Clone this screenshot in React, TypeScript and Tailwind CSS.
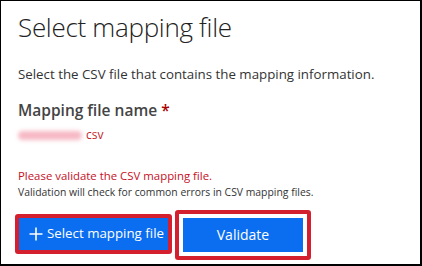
export default function App() {
  return (
    <div className="w-[422px] h-[266px] bg-white border-black border-t border-l border-r-2 border-b-2 font-['Open_Sans',sans-serif] overflow-hidden">
      <div className="pl-[17px] pt-[6px]">
        <h1 className="text-[26px] font-light leading-[40px] text-[#222] tracking-[-0.3px]">Select mapping file</h1>
        <p className="mt-[18px] text-[13.3px] leading-[18px] text-[#333]">Select the CSV file that contains the mapping information.</p>
        <div className="mt-[17px] text-[15.5px] font-semibold leading-[20px] text-[#444]">
          Mapping file name <span className="text-[#a80000]">*</span>
        </div>
        <div className="mt-[7px] flex items-center gap-[4px] text-[12px] leading-[16px]">
          <span className="inline-block w-[64px] h-[9px] rounded-full bg-[#f6b8c4] blur-[2px]" />
          <span className="text-[#c4262e]">csv</span>
        </div>
        <p className="mt-[25px] text-[11.4px] leading-[16px] text-[#c50f1f]">Please validate the CSV mapping file.</p>
        <p className="text-[10.4px] leading-[16px] text-[#333]">Validation will check for common errors in CSV mapping files.</p>
        <div className="mt-[14px] ml-[-3px] flex items-start gap-[3px]">
          <div className="border-[4px] border-[#d4202e] rounded-[3px]">
            <button className="flex items-center gap-[4px] h-[32px] pl-[10px] pr-[4px] bg-[#0b6ef0] text-white text-[13.3px] leading-none">
              <svg width="14" height="14" viewBox="0 0 14 14" className="shrink-0">
                <path d="M7 0.5V13.5M0.5 7H13.5" stroke="white" strokeWidth="1.6" fill="none" />
              </svg>
              <span>Select mapping file</span>
            </button>
          </div>
          <div className="mt-[-4px] border-[4px] border-[#d4202e] rounded-[3px] p-[4px] bg-white">
            <button className="w-[120px] h-[34px] bg-[#0b6ef0] text-white text-[14px] leading-none">Validate</button>
          </div>
        </div>
      </div>
    </div>
  )
}
